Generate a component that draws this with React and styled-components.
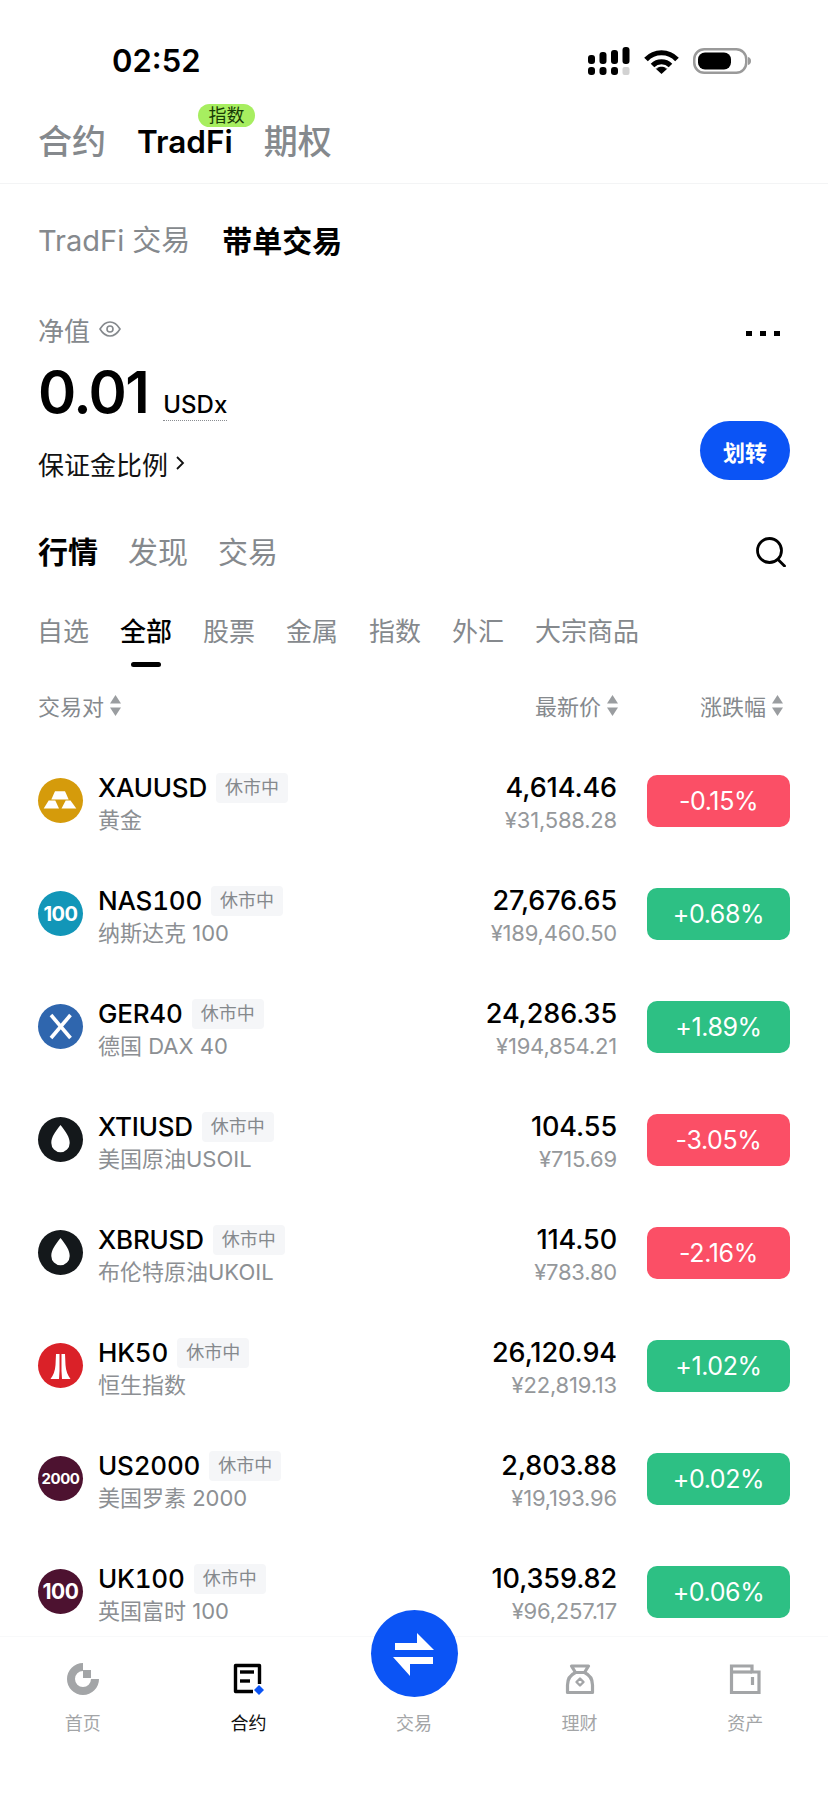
import React from 'react'
import styled, { createGlobalStyle } from 'styled-components'

const GlobalStyle = createGlobalStyle`
	html, body {
		margin: 0;
		padding: 0;
		background: #fff;
	}
	body {
		font-family: Inter, "Noto Sans CJK SC", sans-serif;
		color: #000;
	}
	* {
		box-sizing: border-box;
	}
`

const Page = styled.div`
	width: 828px;
	height: 1800px;
	overflow: hidden;
	display: flex;
	flex-direction: column;
	background: #fff;
`

const StatusBar = styled.div`
	height: 100px;
	padding: 22px 76px 0 112px;
	display: flex;
	align-items: center;
	justify-content: space-between;
`
const Time = styled.div`
	font-size: 31px;
	font-weight: 600;
	line-height: 40px;
`
const StatusIcons = styled.div`
	display: flex;
	align-items: center;
	gap: 14px;
`

const TopTabs = styled.div`
	height: 84px;
	padding: 0 38px;
	display: flex;
	align-items: center;
	gap: 31px;
	border-bottom: 1px solid #f3f4f5;
`
const TopTab = styled.div`
	position: relative;
	font-size: ${props => props.$active ? '31.5px' : '34px'};
	font-weight: ${props => props.$active ? 600 : 500};
	color: ${props => props.$active ? '#000' : '#85898d'};
	line-height: 44px;
`
const Hot = styled.span`
	position: absolute;
	left: 61px;
	top: -16px;
	width: 57px;
	height: 23px;
	border-radius: 12px;
	background: #a7ee60;
	color: #173a05;
	font-size: 18px;
	font-weight: 400;
	line-height: 23px;
	text-align: center;
`

const SubTabs = styled.div`
	height: 114px;
	padding: 0 38px;
	display: flex;
	align-items: center;
	gap: 32px;
`
const SubTab = styled.div`
	font-size: ${props => props.$active ? '30px' : '29px'};
	font-weight: ${props => props.$active ? 600 : 400};
	color: ${props => props.$active ? '#000' : '#85898d'};
	line-height: 40px;
`

const Account = styled.div`
	padding: 0 38px;
	display: flex;
	justify-content: space-between;
`
const AccountInfo = styled.div`
	display: flex;
	flex-direction: column;
`
const EquityLabel = styled.div`
	height: 62px;
	margin-bottom: 2px;
	display: flex;
	align-items: center;
	gap: 9px;
	font-size: 26px;
	color: #85898d;
`
const Amount = styled.div`
	height: 60px;
	display: flex;
	align-items: baseline;
	gap: 15px;
`
const AmountValue = styled.span`
	font-size: 58px;
	font-weight: 600;
	line-height: 60px;
	letter-spacing: -1.5px;
`
const Unit = styled.span`
	font-size: 24px;
	font-weight: 500;
	line-height: 30px;
	border-bottom: 1px dotted #8a8d91;
`
const Margin = styled.div`
	margin-top: 17px;
	height: 48px;
	display: flex;
	align-items: center;
	gap: 7px;
	font-size: 26px;
	color: #111;
`
const AccountSide = styled.div`
	display: flex;
	flex-direction: column;
	align-items: flex-end;
	justify-content: space-between;
	padding: 33px 0 7px;
`
const Dots = styled.div`
	display: flex;
	gap: 8px;
	margin-right: 10px;
`
const Dot = styled.i`
	width: 6px;
	height: 5px;
	background: #000;
`
const TransferButton = styled.div`
	width: 90px;
	height: 59px;
	border-radius: 30px;
	background: #0b54f5;
	color: #fff;
	font-size: 22px;
	font-weight: 600;
	display: flex;
	align-items: center;
	justify-content: center;
`

const MarketTabs = styled.div`
	height: 128px;
	padding: 0 42px 2px 38px;
	display: flex;
	align-items: center;
	gap: 30px;
`
const MarketTab = styled.div`
	font-size: 30px;
	font-weight: ${props => props.$active ? 600 : 400};
	color: ${props => props.$active ? '#000' : '#85898d'};
`
const SearchSlot = styled.div`
	margin: 4px 0 0 auto;
	display: flex;
`

const Categories = styled.div`
	padding: 0 37px;
	display: flex;
	gap: 31px;
`
const Category = styled.div`
	display: flex;
	flex-direction: column;
	align-items: center;
	font-size: 26px;
	line-height: 34px;
	font-weight: ${props => props.$active ? 500 : 400};
	color: ${props => props.$active ? '#000' : '#85898d'};
	&::after {
		content: '';
		width: 30px;
		height: 5px;
		margin-top: 13px;
		border-radius: 3px;
		background: ${props => props.$active ? '#000' : 'transparent'};
	}
`

const TableHead = styled.div`
	height: 77px;
	padding: 0 38px 1px;
	display: flex;
	align-items: center;
	font-size: 22px;
	color: #85898d;
`
const HeadCell = styled.div`
	flex: none;
	white-space: nowrap;
	display: flex;
	align-items: center;
	gap: 6px;
	margin-left: ${props => props.$gap || 0}px;
`
const List = styled.div`
	height: 892px;
	overflow: hidden;
`
const Row = styled.div`
	height: 113px;
	padding: 0 38px;
	display: grid;
	grid-template-columns: 1fr auto 143px;
	column-gap: 30px;
	align-items: center;
`
const Pair = styled.div`
	display: flex;
	align-items: center;
	gap: 15px;
`
const Coin = styled.div`
	width: 45px;
	height: 45px;
	flex: none;
	border-radius: 50%;
	background: ${props => props.$bg};
	color: #fff;
	font-size: ${props => props.$size || 20}px;
	font-weight: 700;
	letter-spacing: -0.5px;
	display: flex;
	align-items: center;
	justify-content: center;
`
const PairText = styled.div`
	padding-top: 6px;
`
const NameLine = styled.div`
	height: 30px;
	display: flex;
	align-items: center;
	gap: 9px;
`
const Name = styled.span`
	font-size: 26px;
	font-weight: 500;
	line-height: 30px;
	letter-spacing: -0.2px;
	font-variant-numeric: tabular-nums;
`
const Tag = styled.span`
	height: 30px;
	padding: 0 9px;
	border-radius: 4px;
	background: #f5f6f8;
	color: #85898d;
	font-size: 18px;
	line-height: 30px;
`
const SubLine = styled.div`
	margin-top: 2px;
	font-size: 22px;
	line-height: 30px;
	color: #8c8f93;
`
const Price = styled.div`
	padding-top: 6px;
	text-align: right;
`
const PriceValue = styled.div`
	font-size: 27px;
	font-weight: 500;
	line-height: 30px;
	letter-spacing: -0.1px;
`
const PriceFiat = styled.div`
	margin-top: 2px;
	font-size: 22px;
	line-height: 30px;
	letter-spacing: -0.2px;
	color: #95989b;
`
const Change = styled.div`
	height: 52px;
	border-radius: 10px;
	background: ${props => props.$up ? '#2dc084' : '#fb4f66'};
	color: #fff;
	font-size: 25px;
	font-weight: 400;
	letter-spacing: -0.4px;
	display: flex;
	align-items: center;
	justify-content: center;
`

const Nav = styled.div`
	position: relative;
	flex: none;
	height: 164px;
	display: grid;
	grid-template-columns: repeat(5, 1fr);
	border-top: 1px solid #f8f9fa;
	padding-top: 26px;
`
const NavItem = styled.div`
	display: flex;
	flex-direction: column;
	align-items: center;
	font-size: 18px;
	line-height: 28px;
	color: ${props => props.$active ? '#111' : '#a3a5a7'};
`
const NavIconSlot = styled.div`
	height: 32px;
	margin-bottom: 15px;
`
const Fab = styled.div`
	position: absolute;
	left: 371px;
	top: -27px;
	width: 87px;
	height: 87px;
	border-radius: 50%;
	background: #0b54f5;
`

const SignalIcon = () => (
	<svg width="42" height="28" viewBox="0 0 42 28">
		<rect x="0" y="8" width="7" height="9" rx="3" />
		<rect x="11.5" y="5" width="7" height="12" rx="3" />
		<rect x="23" y="3" width="7" height="14" rx="3" />
		<rect x="34.5" y="0" width="7" height="17" rx="3" />
		<rect x="0" y="20" width="7" height="8" rx="3" />
		<rect x="11.5" y="20" width="7" height="8" rx="3" />
		<rect x="23" y="20" width="7" height="8" rx="3" />
		<rect x="34.5" y="20" width="7" height="8" rx="2" fill="#d2d2d2" />
	</svg>
)

const WifiIcon = () => (
	<svg width="35" height="25" viewBox="0 0 35 25" fill="none" stroke="#000" strokeWidth="5">
		<path d="M2 10.5C10.5 1.5 24.5 1.5 33 10.5" />
		<path d="M8.5 16.5C13.5 11.5 21.5 11.5 26.5 16.5" />
		<path d="M11.5 19.5H23.5L17.5 25Z" fill="#000" stroke="none" />
		<path d="M13 19C15.5 17.2 19.5 17.2 22 19L17.5 24Z" fill="#000" stroke="none" />
	</svg>
)

const BatteryIcon = () => (
	<svg width="59" height="26" viewBox="0 0 59 26">
		<rect x="1.25" y="1.25" width="52" height="23.5" rx="10" fill="#fff" stroke="#9a9a9a" strokeWidth="2.5" />
		<rect x="5" y="4.5" width="33" height="17" rx="7" fill="#000" />
		<path d="M55 9C57 9.5 58 11 58 13C58 15 57 16.5 55 17Z" fill="#9a9a9a" />
	</svg>
)

const EyeIcon = () => (
	<svg width="22" height="16" viewBox="0 0 22 16" fill="none" stroke="#85898d" strokeWidth="1.6">
		<path d="M1 8C4 3 7.5 1 11 1C14.5 1 18 3 21 8C18 13 14.5 15 11 15C7.5 15 4 13 1 8Z" />
		<circle cx="11" cy="8" r="3" />
	</svg>
)

const ChevronIcon = () => (
	<svg width="10" height="14" viewBox="0 0 10 14" fill="none" stroke="#111" strokeWidth="1.8">
		<path d="M2 1L8 7L2 13" />
	</svg>
)

const SearchIcon = () => (
	<svg width="30" height="30" viewBox="0 0 30 30" fill="none" stroke="#000" strokeWidth="2.8" strokeLinecap="round">
		<circle cx="13.5" cy="13.5" r="12" />
		<path d="M22 22.5L28.5 29" />
	</svg>
)

const SortIcon = () => (
	<svg width="11" height="21" viewBox="0 0 11 21" fill="#9a9da0">
		<path d="M5.5 0L11 8.5H0Z" />
		<path d="M5.5 21L11 12.5H0Z" />
	</svg>
)

const GoldIcon = () => (
	<svg width="45" height="45" viewBox="0 0 45 45" fill="#fff">
		<path d="M17 13.3H27L30.7 21.6H13.3Z" />
		<path d="M10.7 22.5H17.3L21 30.5H5.7Z" />
		<path d="M27.7 22.5H32.5L38.3 30.5H23.5Z" />
	</svg>
)

const CrossIcon = () => (
	<svg width="45" height="45" viewBox="0 0 45 45" stroke="#fff" strokeWidth="3.6">
		<path d="M13 11L32.5 34" />
		<path d="M32.5 11L13 34" />
	</svg>
)

const DropIcon = () => (
	<svg width="45" height="45" viewBox="0 0 45 45" fill="#fff">
		<path d="M22.5 8C17 15 13.3 20 13.3 26A9.2 9.2 0 0 0 31.7 26C31.7 20 28 15 22.5 8Z" />
	</svg>
)

const HangSengIcon = () => (
	<svg width="45" height="45" viewBox="0 0 45 45" fill="#fff">
		<path d="M18 11H21.5V28L21 36H12.5Q17 30 17.5 22Z" />
		<path d="M27 11H23.5V28L24 36H32.5Q28 30 27.5 22Z" />
	</svg>
)

const HomeIcon = () => (
	<svg width="32" height="32" viewBox="0 0 32 32" fill="none">
		<path d="M16 4A12 12 0 1 0 28 16" stroke="#a3a5a7" strokeWidth="8" />
		<rect x="16" y="7" width="8" height="8" fill="#a3a5a7" />
	</svg>
)

const ContractIcon = () => (
	<svg width="32" height="32" viewBox="0 0 32 32" fill="none" stroke="#000" strokeWidth="3.4">
		<path d="M21 28.5H3.5V2.5H27.5V21" strokeLinejoin="round" />
		<path d="M8 9H22" />
		<path d="M8 18H18" />
		<path d="M27 22L32 27L27 32L22 27Z" fill="#0b54f5" stroke="none" />
	</svg>
)

const BagIcon = () => (
	<svg width="32" height="32" viewBox="0 0 32 32" fill="none" stroke="#a3a5a7" strokeWidth="3.2" strokeLinejoin="round">
		<path d="M7.5 3H24.5L20.5 9.5H11.5Z" />
		<path d="M11.5 9.5C6 12 3.5 17 3.5 22V29.5H28.5V22C28.5 17 26 12 20.5 9.5" />
		<path d="M16 15.5L19.5 19L16 22.5L12.5 19Z" strokeWidth="2.4" />
	</svg>
)

const WalletIcon = () => (
	<svg width="32" height="32" viewBox="0 0 32 32" fill="none" stroke="#a3a5a7" strokeWidth="3.2">
		<path d="M2.5 29.5V3H23V9H30V29.5Z" />
		<path d="M2.5 9H23" />
		<path d="M23.5 14V22" />
	</svg>
)

const SwapIcon = () => (
	<svg width="87" height="87" viewBox="0 0 87 87" fill="#fff">
		<path d="M24 33H46V23L63 40H24Z" />
		<path d="M22 47H62V54H39V66Z" />
	</svg>
)

const coins = {
	gold: { bg: '#d59b0b', icon: <GoldIcon /> },
	nas: { bg: '#1296b8', label: '100', size: 20 },
	ger: { bg: '#2f66ae', icon: <CrossIcon /> },
	oil: { bg: '#14181b', icon: <DropIcon /> },
	hk: { bg: '#da2128', icon: <HangSengIcon /> },
	us: { bg: '#4d1230', label: '2000', size: 15 },
	uk: { bg: '#4d1230', label: '100', size: 21 }
}

const rows = [
	{ name: 'XAUUSD', sub: '黄金', price: '4,614.46', fiat: '¥31,588.28', change: '-0.15%', coin: 'gold' },
	{ name: 'NAS100', sub: '纳斯达克 100', price: '27,676.65', fiat: '¥189,460.50', change: '+0.68%', coin: 'nas' },
	{ name: 'GER40', sub: '德国 DAX 40', price: '24,286.35', fiat: '¥194,854.21', change: '+1.89%', coin: 'ger' },
	{ name: 'XTIUSD', sub: '美国原油USOIL', price: '104.55', fiat: '¥715.69', change: '-3.05%', coin: 'oil' },
	{ name: 'XBRUSD', sub: '布伦特原油UKOIL', price: '114.50', fiat: '¥783.80', change: '-2.16%', coin: 'oil' },
	{ name: 'HK50', sub: '恒生指数', price: '26,120.94', fiat: '¥22,819.13', change: '+1.02%', coin: 'hk' },
	{ name: 'US2000', sub: '美国罗素 2000', price: '2,803.88', fiat: '¥19,193.96', change: '+0.02%', coin: 'us' },
	{ name: 'UK100', sub: '英国富时 100', price: '10,359.82', fiat: '¥96,257.17', change: '+0.06%', coin: 'uk' }
]

const categories = ['自选', '全部', '股票', '金属', '指数', '外汇', '大宗商品']

const navItems = [
	{ label: '首页', icon: <HomeIcon /> },
	{ label: '合约', icon: <ContractIcon />, active: true },
	{ label: '交易' },
	{ label: '理财', icon: <BagIcon /> },
	{ label: '资产', icon: <WalletIcon /> }
]

export default function App() {
	return (
		<Page>
			<GlobalStyle />
			<StatusBar>
				<Time>02:52</Time>
				<StatusIcons>
					<SignalIcon />
					<WifiIcon />
					<BatteryIcon />
				</StatusIcons>
			</StatusBar>
			<TopTabs>
				<TopTab>合约</TopTab>
				<TopTab $active>
					TradFi
					<Hot>指数</Hot>
				</TopTab>
				<TopTab>期权</TopTab>
			</TopTabs>
			<SubTabs>
				<SubTab>TradFi 交易</SubTab>
				<SubTab $active>带单交易</SubTab>
			</SubTabs>
			<Account>
				<AccountInfo>
					<EquityLabel>
						净值
						<EyeIcon />
					</EquityLabel>
					<Amount>
						<AmountValue>0.01</AmountValue>
						<Unit>USDx</Unit>
					</Amount>
					<Margin>
						保证金比例
						<ChevronIcon />
					</Margin>
				</AccountInfo>
				<AccountSide>
					<Dots>
						<Dot />
						<Dot />
						<Dot />
					</Dots>
					<TransferButton>划转</TransferButton>
				</AccountSide>
			</Account>
			<MarketTabs>
				<MarketTab $active>行情</MarketTab>
				<MarketTab>发现</MarketTab>
				<MarketTab>交易</MarketTab>
				<SearchSlot>
					<SearchIcon />
				</SearchSlot>
			</MarketTabs>
			<Categories>
				{categories.map(item => (
					<Category key={item} $active={item === '全部'}>{item}</Category>
				))}
			</Categories>
			<TableHead>
				<HeadCell>交易对<SortIcon /></HeadCell>
				<HeadCell $gap={414}>最新价<SortIcon /></HeadCell>
				<HeadCell $gap={82}>涨跌幅<SortIcon /></HeadCell>
			</TableHead>
			<List>
				{rows.map(row => {
					const coin = coins[row.coin]
					return (
						<Row key={row.name}>
							<Pair>
								<Coin $bg={coin.bg} $size={coin.size}>{coin.icon || coin.label}</Coin>
								<PairText>
									<NameLine>
										<Name>{row.name}</Name>
										<Tag>休市中</Tag>
									</NameLine>
									<SubLine>{row.sub}</SubLine>
								</PairText>
							</Pair>
							<Price>
								<PriceValue>{row.price}</PriceValue>
								<PriceFiat>{row.fiat}</PriceFiat>
							</Price>
							<Change $up={row.change[0] === '+'}>{row.change}</Change>
						</Row>
					)
				})}
			</List>
			<Nav>
				{navItems.map(item => (
					<NavItem key={item.label} $active={item.active}>
						<NavIconSlot>{item.icon}</NavIconSlot>
						{item.label}
					</NavItem>
				))}
				<Fab>
					<SwapIcon />
				</Fab>
			</Nav>
		</Page>
	)
}
